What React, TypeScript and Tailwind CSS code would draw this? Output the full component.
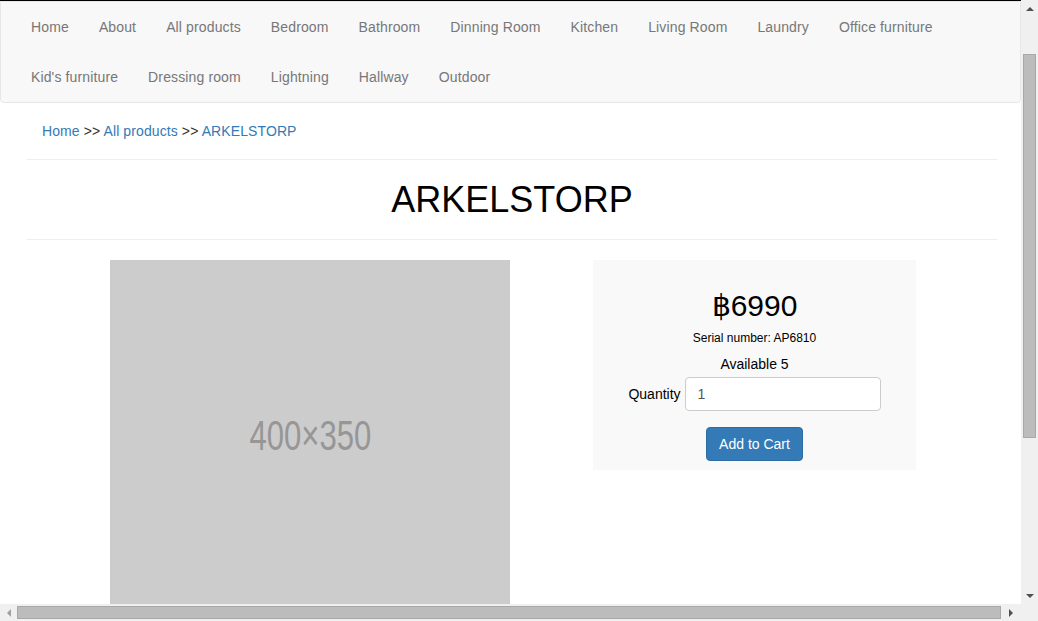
import React from "react";

const navRow1 = [
  "Home",
  "About",
  "All products",
  "Bedroom",
  "Bathroom",
  "Dinning Room",
  "Kitchen",
  "Living Room",
  "Laundry",
  "Office furniture",
];
const navRow2 = ["Kid's furniture", "Dressing room", "Lightning", "Hallway", "Outdoor"];

const font = { fontFamily: '"Liberation Sans", Arial, sans-serif' };

const NavRow = ({ items }: { items: string[] }) => (
  <ul className="flex h-[50px] pl-[15px]">
    {items.map((item) => (
      <li key={item}>
        <a href="#" className="block px-[15px] leading-[50px] text-[14px] tracking-[0.13px] text-[#777]">
          {item}
        </a>
      </li>
    ))}
  </ul>
);

// fake browser scrollbars, like in the screenshot
const VScrollbar = () => (
  <div className="w-[17px] h-[604px] bg-[#f0f0f0] flex flex-col items-center">
    <div className="h-[17px] w-full flex items-center justify-center">
      <div className="w-0 h-0 border-l-[4px] border-r-[4px] border-b-[4px] border-l-transparent border-r-transparent border-b-[#505050]" />
    </div>
    <div className="mt-[37px] w-[13px] h-[384px] bg-[#bcbcbc] border border-[#a8a8a8]" />
    <div className="flex-1" />
    <div className="h-[17px] w-full flex items-center justify-center">
      <div className="w-0 h-0 border-l-[4px] border-r-[4px] border-t-[4px] border-l-transparent border-r-transparent border-t-[#505050]" />
    </div>
  </div>
);

const HScrollbar = () => (
  <div className="h-[17px] w-full bg-[#f0f0f0] flex items-center">
    <div className="w-[17px] h-full flex items-center justify-center">
      <div className="w-0 h-0 border-t-[4px] border-b-[4px] border-r-[4px] border-t-transparent border-b-transparent border-r-[#a0a0a0]" />
    </div>
    <div className="w-[984px] h-[13px] bg-[#bcbcbc] border border-[#a8a8a8]" />
    <div className="w-[20px] h-full flex items-center justify-center">
      <div className="w-0 h-0 border-t-[4px] border-b-[4px] border-l-[4px] border-t-transparent border-b-transparent border-l-[#505050]" />
    </div>
  </div>
);

export default function App() {
  return (
    <div className="w-[1038px] h-[621px] overflow-hidden bg-white" style={font}>
      <div className="flex">
        <div className="w-[1021px] h-[604px] overflow-hidden">
          <div className="h-px bg-black" />
          <nav className="bg-[#f8f8f8] border border-[#e7e7e7] rounded-b-[4px]">
            <NavRow items={navRow1} />
            <NavRow items={navRow2} />
          </nav>

          <div className="ml-[27px] w-[970px]">
            <div className="pt-[18px] pl-[15px] text-[14px] leading-[20px] tracking-[0.1px] text-[#333]">
              <a href="#" className="text-[#337ab7]">Home</a> &gt;&gt;{" "}
              <a href="#" className="text-[#337ab7]">All products</a> &gt;&gt;{" "}
              <a href="#" className="text-[#337ab7]">ARKELSTORP</a>
            </div>
            <hr className="mt-[18px] border-t border-[#eee]" />
            <h1 className="mt-[20px] text-center text-[36px] leading-[40px] text-black">ARKELSTORP</h1>
            <hr className="mt-[19px] border-t border-[#eee]" />

            <div className="grid grid-cols-2 mt-[20px]">
              <div className="pl-[83px]">
                <div className="w-[400px] h-[350px] bg-[#cccccc] flex items-center justify-center">
                  <span className="text-[42px] text-[#969696] scale-x-[0.74] inline-block mt-[1px]">400×350</span>
                </div>
              </div>
              <div>
                <div className="w-[323px] mx-auto bg-[#f9f9f9] pt-[29px] pb-[9px] flex flex-col items-center text-[#333]">
                  <div className="text-[30px] leading-[33px] text-black">฿6990</div>
                  <div className="mt-[8px] text-[12px] leading-[17px] text-black">Serial number: AP6810</div>
                  <div className="mt-[7px] text-[14px] leading-[20px] text-black">Available 5</div>
                  <div className="mt-[3px] flex items-center gap-[4px]">
                    <label className="text-[14px] text-black">Quantity</label>
                    <input
                      type="number"
                      defaultValue={1}
                      className="w-[196px] h-[34px] px-[12px] border border-[#ccc] rounded-[4px] bg-white text-[14px] text-[#555] outline-none [appearance:textfield]"
                    />
                  </div>
                  <button className="mt-[16px] h-[34px] px-[12px] bg-[#337ab7] border border-[#2e6da4] rounded-[4px] text-white text-[14px]">
                    Add to Cart
                  </button>
                </div>
              </div>
            </div>
          </div>
        </div>
        <VScrollbar />
      </div>
      <HScrollbar />
    </div>
  );
}
